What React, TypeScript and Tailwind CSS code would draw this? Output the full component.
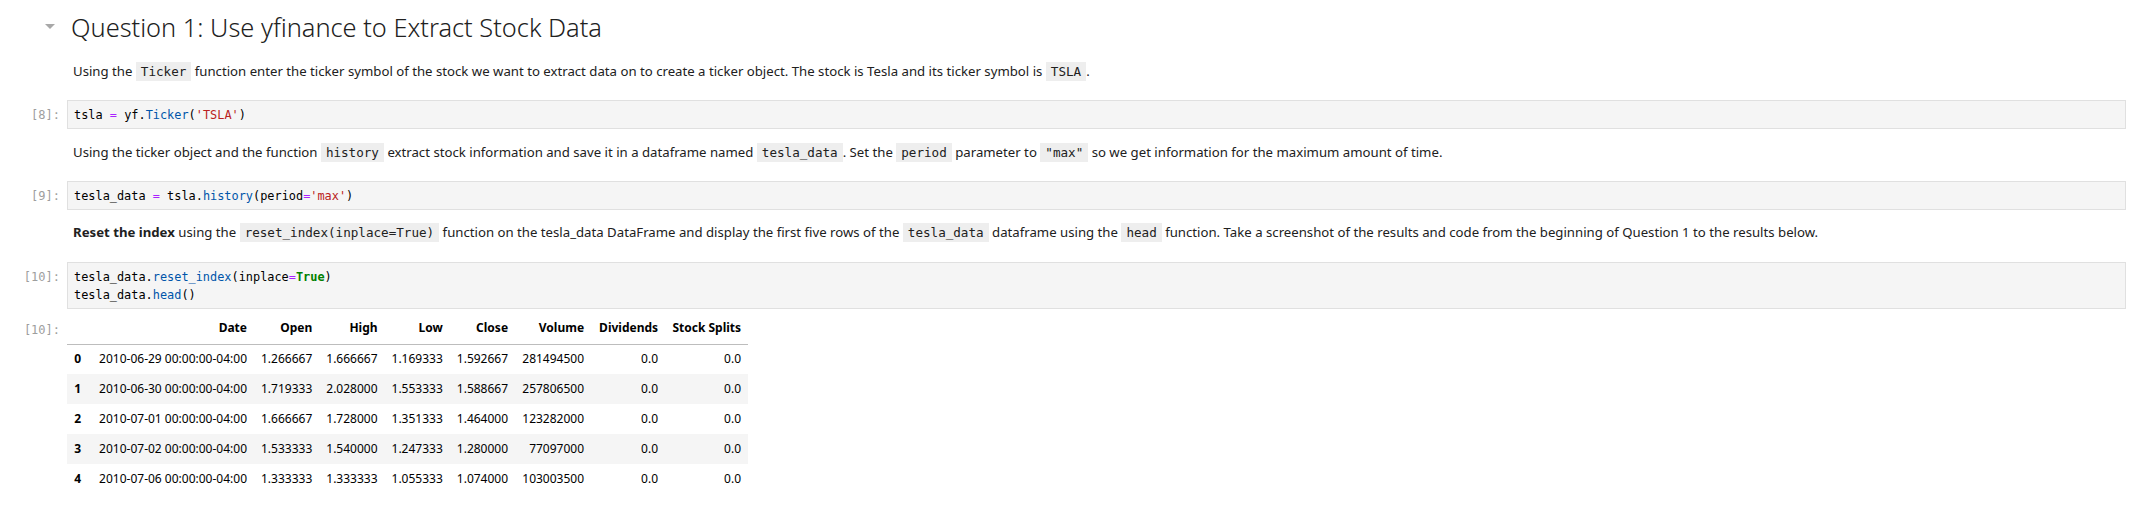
import React from 'react';

const sans = "font-['Noto_Sans','Open_Sans',sans-serif]";
const mono = "font-['DejaVu_Sans_Mono','Liberation_Mono',monospace]";

// inline code inside markdown text
function Code({ children }: { children: React.ReactNode }) {
  return (
    <code className={`${mono} text-[12.6px] bg-[#eeeeee] px-[5px] py-[2px] text-[#212121]`}>{children}</code>
  );
}

function Prompt({ n }: { n: string }) {
  return (
    <div className={`${mono} w-[67px] shrink-0 pr-[7px] text-right text-[12px] leading-[18px] pt-[5.5px] text-[#9e9e9e]`}>
      [{n}]:
    </div>
  );
}

function CodeCell({ n, children }: { n: string; children: React.ReactNode }) {
  return (
    <div className="flex">
      <Prompt n={n} />
      <div
        className={`${mono} flex-1 mr-[8px] bg-[#f5f5f5] border border-[#e0e0e0] px-[6px] py-[4.5px] text-[11.9px] leading-[18px] text-black whitespace-pre`}
      >
        {children}
      </div>
    </div>
  );
}

function Markdown({ children, className = '' }: { children: React.ReactNode; className?: string }) {
  return (
    <div className={`pl-[73px] pr-[8px] text-[13.2px] leading-[20px] text-[#212121] ${className}`}>{children}</div>
  );
}

const op = 'text-[#aa22ff]';
const fn = 'text-[#0055aa]';
const str = 'text-[#ba2121]';

const rows = [
  ['0', '2010-06-29 00:00:00-04:00', '1.266667', '1.666667', '1.169333', '1.592667', '281494500', '0.0', '0.0'],
  ['1', '2010-06-30 00:00:00-04:00', '1.719333', '2.028000', '1.553333', '1.588667', '257806500', '0.0', '0.0'],
  ['2', '2010-07-01 00:00:00-04:00', '1.666667', '1.728000', '1.351333', '1.464000', '123282000', '0.0', '0.0'],
  ['3', '2010-07-02 00:00:00-04:00', '1.533333', '1.540000', '1.247333', '1.280000', '77097000', '0.0', '0.0'],
  ['4', '2010-07-06 00:00:00-04:00', '1.333333', '1.333333', '1.055333', '1.074000', '103003500', '0.0', '0.0'],
];

const headers = ['', 'Date', 'Open', 'High', 'Low', 'Close', 'Volume', 'Dividends', 'Stock Splits'];
const widths = ['w-[21px]', 'w-[166px]', 'w-[65px]', 'w-[65px]', 'w-[65px]', 'w-[65px]', 'w-[76px]', 'w-[74px]', 'w-[83px]'];

export default function App() {
  return (
    <div className={`${sans} w-[2134px] h-[509px] bg-white overflow-hidden`}>
      {/* heading */}
      <div className="flex items-center h-[30px] mt-[12px]">
        <div className="w-[71px] shrink-0 flex justify-end pr-[16px]">
          <svg width="10" height="6" viewBox="0 0 10 6">
            <path d="M0 0 L10 0 L5 5 Z" fill="#a8a8a8" />
          </svg>
        </div>
        <h2 className="text-[25.4px] font-light leading-[30px] text-[#212121]">Question 1: Use yfinance to Extract Stock Data</h2>
      </div>

      <Markdown className="mt-[19px]">
        Using the <Code>Ticker</Code> function enter the ticker symbol of the stock we want to extract data on to create a
        ticker object. The stock is Tesla and its ticker symbol is <Code>TSLA</Code>.
      </Markdown>

      <div className="mt-[18px]">
        <CodeCell n="8">
          tsla <span className={op}>=</span> yf<span>.</span>
          <span className={fn}>Ticker</span>(<span className={str}>'TSLA'</span>)
        </CodeCell>
      </div>

      <Markdown className="mt-[13px]">
        Using the ticker object and the function <Code>history</Code> extract stock information and save it in a dataframe
        named <Code>tesla_data</Code>. Set the <Code>period</Code> parameter to <Code>"max"</Code> so we get information
        for the maximum amount of time.
      </Markdown>

      <div className="mt-[18px]">
        <CodeCell n="9">
          tesla_data <span className={op}>=</span> tsla.<span className={fn}>history</span>(period
          <span className={op}>=</span>
          <span className={str}>'max'</span>)
        </CodeCell>
      </div>

      <Markdown className="mt-[12px]">
        <b className="font-bold">Reset the index</b> using the <Code>reset_index(inplace=True)</Code> function on the
        tesla_data DataFrame and display the first five rows of the <Code>tesla_data</Code> dataframe using the{' '}
        <Code>head</Code> function. Take a screenshot of the results and code from the beginning of Question 1 to the
        results below.
      </Markdown>

      <div className="mt-[19px]">
        <CodeCell n="10">
          tesla_data.<span className={fn}>reset_index</span>(inplace<span className={op}>=</span>
          <span className="text-[#008000] font-bold">True</span>){'\n'}tesla_data.<span className={fn}>head</span>()
        </CodeCell>
      </div>

      {/* output */}
      <div className="flex mt-[4px]">
        <div className={`${mono} w-[67px] shrink-0 pr-[7px] text-right text-[12px] leading-[18px] pt-[8px] text-[#9e9e9e]`}>
          [10]:
        </div>
        <table className="table-fixed border-collapse text-[12px] text-black">
          <thead>
            <tr className="h-[31px] border-b border-[#bdbdbd]">
              {headers.map((h, i) => (
                <th key={i} className={`${widths[i]} px-[7px] text-right font-bold whitespace-nowrap`}>
                  {h}
                </th>
              ))}
            </tr>
          </thead>
          <tbody>
            {rows.map((r, ri) => (
              <tr key={ri} className={`h-[30px] ${ri % 2 === 1 ? 'bg-[#f5f5f5]' : ''}`}>
                {r.map((c, ci) =>
                  ci === 0 ? (
                    <th key={ci} className="px-[7px] text-right font-bold">
                      {c}
                    </th>
                  ) : (
                    <td key={ci} className="px-[7px] text-right whitespace-nowrap">
                      {c}
                    </td>
                  )
                )}
              </tr>
            ))}
          </tbody>
        </table>
      </div>
    </div>
  );
}
